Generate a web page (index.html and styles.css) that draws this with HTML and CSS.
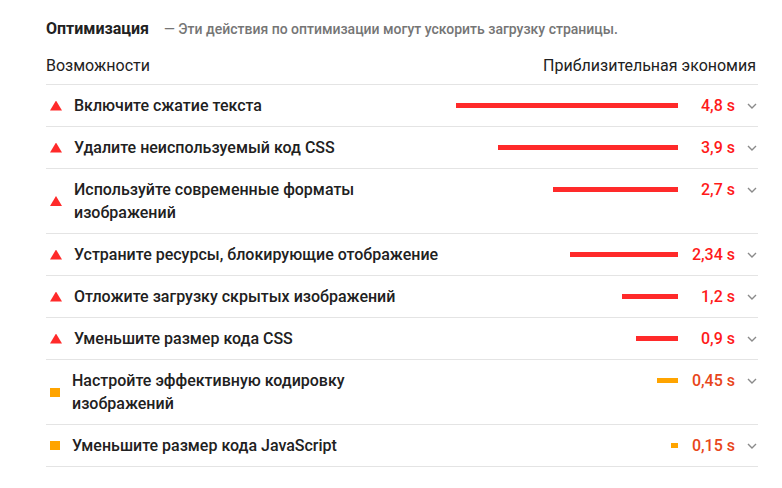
FILE: index.html
```html
<!DOCTYPE html>
<html lang="ru">
<head>
<meta charset="UTF-8">
<meta name="viewport" content="width=device-width, initial-scale=1.0">
<title>Оптимизация</title>
<link rel="stylesheet" href="styles.css">
</head>
<body>

<div class="wrap">
  <div class="group-head">
    <span class="group-title">Оптимизация</span>
    <span class="group-desc">— Эти действия по оптимизации могут ускорить загрузку страницы.</span>
  </div>

  <div class="cols">
    <span>Возможности</span>
    <span>Приблизительная экономия</span>
  </div>

  <ul class="list">
    <li class="row fail">
      <i class="icon"></i>
      <p class="title">Включите сжатие текста</p>
      <div class="spark"><b class="bar" style="width: 222px"></b></div>
      <span class="value">4,8 s</span>
      <svg class="chev" width="10" height="6" viewBox="0 0 10 6"><polyline points="1,1 5,5 9,1"/></svg>
    </li>
    <li class="row fail">
      <i class="icon"></i>
      <p class="title">Удалите неиспользуемый код CSS</p>
      <div class="spark"><b class="bar" style="width: 180px"></b></div>
      <span class="value">3,9 s</span>
      <svg class="chev" width="10" height="6" viewBox="0 0 10 6"><polyline points="1,1 5,5 9,1"/></svg>
    </li>
    <li class="row fail">
      <i class="icon"></i>
      <p class="title">Используйте современные форматы изображений</p>
      <div class="spark"><b class="bar" style="width: 125px"></b></div>
      <span class="value">2,7 s</span>
      <svg class="chev" width="10" height="6" viewBox="0 0 10 6"><polyline points="1,1 5,5 9,1"/></svg>
    </li>
    <li class="row fail">
      <i class="icon"></i>
      <p class="title">Устраните ресурсы, блокирующие отображение</p>
      <div class="spark"><b class="bar" style="width: 108px"></b></div>
      <span class="value">2,34 s</span>
      <svg class="chev" width="10" height="6" viewBox="0 0 10 6"><polyline points="1,1 5,5 9,1"/></svg>
    </li>
    <li class="row fail">
      <i class="icon"></i>
      <p class="title">Отложите загрузку скрытых изображений</p>
      <div class="spark"><b class="bar" style="width: 56px"></b></div>
      <span class="value">1,2 s</span>
      <svg class="chev" width="10" height="6" viewBox="0 0 10 6"><polyline points="1,1 5,5 9,1"/></svg>
    </li>
    <li class="row fail">
      <i class="icon"></i>
      <p class="title">Уменьшите размер кода CSS</p>
      <div class="spark"><b class="bar" style="width: 42px"></b></div>
      <span class="value">0,9 s</span>
      <svg class="chev" width="10" height="6" viewBox="0 0 10 6"><polyline points="1,1 5,5 9,1"/></svg>
    </li>
    <li class="row average">
      <i class="icon"></i>
      <p class="title">Настройте эффективную кодировку изображений</p>
      <div class="spark"><b class="bar" style="width: 21px"></b></div>
      <span class="value">0,45 s</span>
      <svg class="chev" width="10" height="6" viewBox="0 0 10 6"><polyline points="1,1 5,5 9,1"/></svg>
    </li>
    <li class="row average">
      <i class="icon"></i>
      <p class="title">Уменьшите размер кода JavaScript</p>
      <div class="spark"><b class="bar" style="width: 7px"></b></div>
      <span class="value">0,15 s</span>
      <svg class="chev" width="10" height="6" viewBox="0 0 10 6"><polyline points="1,1 5,5 9,1"/></svg>
    </li>
  </ul>
</div>

</body>
</html>
```

FILE: styles.css
```css
*{
  margin: 0;
  padding: 0;
  list-style: none;
  box-sizing: border-box;
}
body{
  font-family: Roboto, "Liberation Sans", "Noto Sans CJK SC", sans-serif;
  color: #212121;
  background: #fff;
}
.wrap{
  width: 712px;
  margin-left: 46px;
  padding-top: 19px;
}
.group-head{
  line-height: 20px;
  display: flex;
  align-items: baseline;
}
.group-title{
  font-size: 16px;
  font-weight: 700;
  margin-right: 15px;
}
.group-desc{
  font-size: 14px;
  font-weight: 500;
  color: #757575;
}
.cols{
  display: flex;
  justify-content: space-between;
  margin-top: 17px;
  padding-right: 2px;
  font-size: 16px;
  line-height: 20px;
  padding-bottom: 8px;
  border-bottom: 1px solid #e4e4e4;
}
.row{
  display: flex;
  align-items: flex-start;
  padding: 9px 0;
  border-bottom: 1px solid #e4e4e4;
  font-size: 16px;
  line-height: 23px;
}
.icon{
  flex: none;
  align-self: center;
  width: 12px;
  height: 10px;
  margin: 0 12px 0 4px;
}
.fail .icon{
  background: #ff2a2a;
  clip-path: polygon(50% 0, 100% 100%, 0 100%);
}
.average .icon{
  width: 10px;
  height: 9px;
  margin: 0 12px 0 4px;
  background: #ffa400;
}
.title{
  flex: none;
  width: 370px;
  font-weight: 500;
}
.average .title{
  width: 372px;
}
.spark{
  flex: 1;
  height: 23px;
  display: flex;
  align-items: center;
  justify-content: flex-end;
}
.bar{
  display: block;
  height: 5px;
}
.fail .bar{
  background: #ff2a2a;
}
.average .bar{
  background: #ffa400;
}
.value{
  flex: none;
  width: 57px;
  text-align: right;
  font-weight: 500;
}
.fail .value{
  color: #ff1a1a;
}
.average .value{
  color: #e8461a;
}
.chev{
  flex: none;
  margin: 9px 1px 0 12px;
  fill: none;
  stroke: #8a8a8a;
  stroke-width: 1.4;
}
```
